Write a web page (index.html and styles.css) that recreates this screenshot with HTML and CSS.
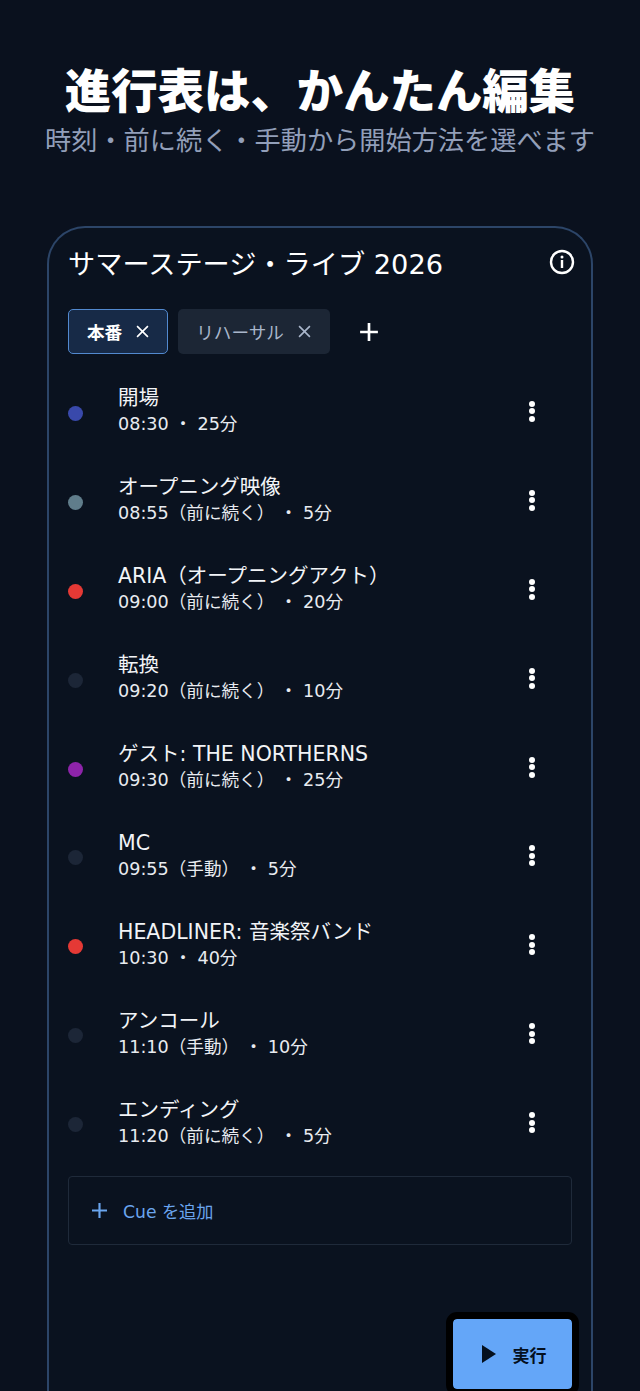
FILE: index.html
```html
<!DOCTYPE html>
<html lang="ja">

<head>
  <meta charset="UTF-8" />
  <title>進行表</title>
  <meta name="viewport" content="width=device-width, initial-scale=1.0" />
  <link rel="stylesheet" href="styles.css">
</head>

<body>

  <header class="hero">
    <h1>進行表は、かんたん編集</h1>
    <p>時刻・前に続く・手動から開始方法を選べます</p>
  </header>

  <main class="phone">
    <div class="title-row">
      <h2>サマーステージ・ライブ 2026</h2>
      <svg class="info" viewBox="0 0 26 26" width="26" height="26">
        <circle cx="13" cy="13" r="11" fill="none" stroke="#fff" stroke-width="2.4" />
        <circle cx="13" cy="8" r="1.5" fill="#fff" />
        <rect x="11.8" y="11" width="2.4" height="8" fill="#fff" />
      </svg>
    </div>

    <div class="tabs">
      <div class="tab active">本番
        <svg class="x" viewBox="0 0 12 12"><path d="M1 1l10 10M11 1L1 11" /></svg>
      </div>
      <div class="tab">リハーサル
        <svg class="x" viewBox="0 0 12 12"><path d="M1 1l10 10M11 1L1 11" /></svg>
      </div>
      <svg class="tab-add" viewBox="0 0 18 18"><path d="M9 1v16M1 9h16" /></svg>
    </div>

    <ul class="cues">
      <li class="cue">
        <span class="dot indigo"></span>
        <div class="cue-text"><div class="cue-name">開場</div><div class="cue-meta">08:30 ・ 25分</div></div>
        <span class="more"><i></i><i></i><i></i></span>
      </li>
      <li class="cue">
        <span class="dot slate"></span>
        <div class="cue-text"><div class="cue-name">オープニング映像</div><div class="cue-meta">08:55（前に続く） ・ 5分</div></div>
        <span class="more"><i></i><i></i><i></i></span>
      </li>
      <li class="cue">
        <span class="dot red"></span>
        <div class="cue-text"><div class="cue-name">ARIA（オープニングアクト）</div><div class="cue-meta">09:00（前に続く） ・ 20分</div></div>
        <span class="more"><i></i><i></i><i></i></span>
      </li>
      <li class="cue">
        <span class="dot"></span>
        <div class="cue-text"><div class="cue-name">転換</div><div class="cue-meta">09:20（前に続く） ・ 10分</div></div>
        <span class="more"><i></i><i></i><i></i></span>
      </li>
      <li class="cue">
        <span class="dot purple"></span>
        <div class="cue-text"><div class="cue-name">ゲスト: THE NORTHERNS</div><div class="cue-meta">09:30（前に続く） ・ 25分</div></div>
        <span class="more"><i></i><i></i><i></i></span>
      </li>
      <li class="cue">
        <span class="dot"></span>
        <div class="cue-text"><div class="cue-name">MC</div><div class="cue-meta">09:55（手動） ・ 5分</div></div>
        <span class="more"><i></i><i></i><i></i></span>
      </li>
      <li class="cue">
        <span class="dot red"></span>
        <div class="cue-text"><div class="cue-name">HEADLINER: 音楽祭バンド</div><div class="cue-meta">10:30 ・ 40分</div></div>
        <span class="more"><i></i><i></i><i></i></span>
      </li>
      <li class="cue">
        <span class="dot"></span>
        <div class="cue-text"><div class="cue-name">アンコール</div><div class="cue-meta">11:10（手動） ・ 10分</div></div>
        <span class="more"><i></i><i></i><i></i></span>
      </li>
      <li class="cue">
        <span class="dot"></span>
        <div class="cue-text"><div class="cue-name">エンディング</div><div class="cue-meta">11:20（前に続く） ・ 5分</div></div>
        <span class="more"><i></i><i></i><i></i></span>
      </li>
    </ul>

    <button class="add-cue" type="button">
      <svg viewBox="0 0 14 14"><path d="M7 0v14M0 7h14" /></svg>
      Cue を追加
    </button>

    <div class="fab-wrap">
      <button class="fab" type="button">
        <svg viewBox="0 0 14 18"><path d="M0 0l14 9L0 18z" /></svg>
        実行
      </button>
    </div>
  </main>

</body>

</html>
```

FILE: styles.css
```css
* {
  box-sizing: border-box;
}

body {
  display: flex;
  flex-direction: column;
  height: 100vh;
  margin: 0;
  padding: 0;
  overflow: hidden;
  font-family: "DejaVu Sans", "Noto Sans CJK JP", sans-serif;
  background-color: #0a111e;
  color: #fff;
}

.hero {
  text-align: center;
  padding-top: 58px;
}

.hero h1 {
  margin: 0;
  font-family: "Noto Sans CJK JP", sans-serif;
  font-size: 46.4px;
  line-height: 60px;
  font-weight: 900;
}

.hero p {
  margin: 1px 0 0;
  font-family: "Noto Sans CJK JP", sans-serif;
  font-size: 26.2px;
  line-height: 40px;
  color: #929fb9;
}

.phone {
  flex: 1;
  min-height: 0;
  overflow: hidden;
  margin: 67px 47px 0;
  padding: 0 19px;
  border: 2px solid #2c4568;
  border-bottom: none;
  border-radius: 38px 38px 0 0;
  background-color: #0a121f;
}

.title-row {
  display: flex;
  justify-content: space-between;
  align-items: center;
  height: 72px;
}

.title-row h2 {
  margin: 0 0 4px;
  font-size: 27.2px;
  font-weight: 400;
}

.info {
  margin: 0 -3px 4px 0;
}

.tabs {
  display: flex;
  align-items: center;
  gap: 10px;
  margin-top: 9px;
}

.tab {
  display: flex;
  align-items: center;
  gap: 14px;
  height: 45px;
  padding: 0 19px 0 18px;
  border-radius: 5px;
  font-family: "Noto Sans CJK JP", sans-serif;
  font-size: 17.6px;
  color: #a9b6cb;
  background-color: #1c2635;
}

.tab.active {
  padding-right: 18px;
  color: #fff;
  font-weight: 700;
  background-color: #172a47;
  border: 1px solid #5289cf;
}

.x {
  width: 13px;
  height: 13px;
  fill: none;
  stroke: currentColor;
  stroke-width: 1.5;
}

.tab-add {
  width: 20px;
  height: 20px;
  margin-left: 19px;
  fill: none;
  stroke: #fff;
  stroke-width: 2.4;
}

.cues {
  list-style: none;
  margin: 15px 0 0;
  padding: 0;
}

.cue {
  display: flex;
  align-items: center;
  height: 88.9px;
}

.dot {
  flex: none;
  width: 15px;
  height: 15px;
  margin-right: 35px;
  border-radius: 50%;
  background-color: #1c2637;
}

.dot.indigo {
  background-color: #3949ab;
}

.dot.slate {
  background-color: #607d8b;
}

.dot.red {
  background-color: #e53935;
}

.dot.purple {
  background-color: #8e24aa;
}

.cue-text {
  flex: 1;
  padding-bottom: 4px;
}

.cue-name {
  font-size: 20.5px;
  line-height: 26px;
  color: #f2f4f7;
}

.cue-meta {
  font-size: 17.6px;
  line-height: 26px;
  color: #e8ebf0;
  white-space: pre;
}

.more {
  display: flex;
  flex-direction: column;
  gap: 1.5px;
  margin: 0 37px 4px 0;
}

.more i {
  display: block;
  width: 6px;
  height: 6px;
  border-radius: 50%;
  background-color: #fff;
}

.add-cue {
  display: flex;
  align-items: center;
  gap: 16px;
  width: 100%;
  height: 69px;
  margin-top: 7px;
  padding: 0 23px;
  font-family: inherit;
  font-size: 17.2px;
  color: #6aa5ee;
  background: none;
  border: 1px solid #1f2a3a;
  border-radius: 4px;
}

.add-cue svg {
  width: 15px;
  height: 15px;
  fill: none;
  stroke: currentColor;
  stroke-width: 2;
}

.fab-wrap {
  display: flex;
  justify-content: flex-end;
  margin-top: 67px;
  margin-right: -7px;
}

.fab-wrap .fab {
  flex: none;
  display: flex;
  align-items: center;
  justify-content: center;
  gap: 17px;
  width: 133px;
  height: 84px;
  padding: 0 0 0 3px;
  font-family: "Noto Sans CJK JP", sans-serif;
  font-size: 17px;
  font-weight: 700;
  color: #04101f;
  background-color: #64a6f8;
  border: 7px solid #000;
  border-radius: 11px;
  background-clip: padding-box;
}

.fab svg {
  width: 14px;
  height: 18px;
  fill: #04101f;
}
```
